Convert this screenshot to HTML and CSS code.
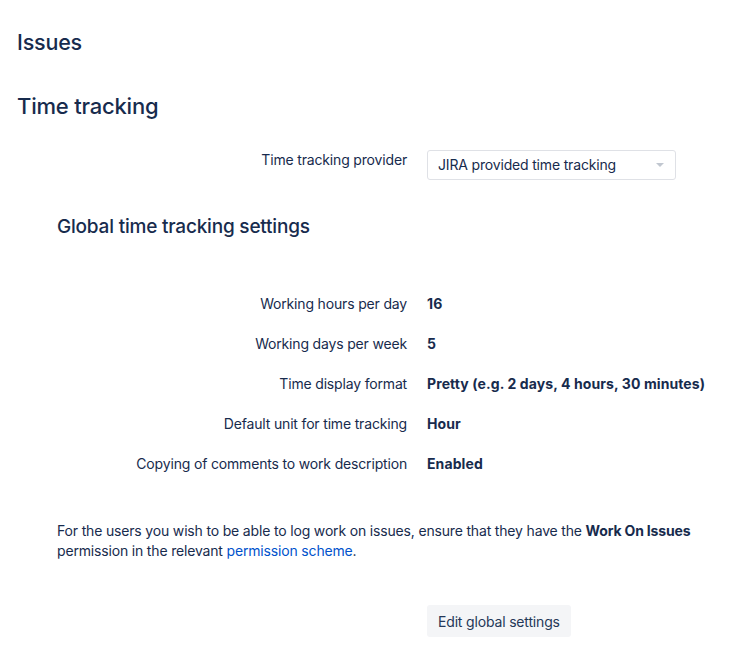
FILE: index.html
```html
<!DOCTYPE html>
<html>

<head>
    <meta name="viewport" content="width=device-width, initial-scale=1.0" charset="utf-8">
    <link rel="stylesheet" href="styles.css">
</head>

<body>
    <div class="page">
        <h1 class="title">Issues</h1>
        <h2 class="section">Time tracking</h2>

        <div class="field provider">
            <div class="label">Time tracking provider</div>
            <div class="select">
                <span>JIRA provided time tracking</span>
                <span class="arrow"></span>
            </div>
        </div>

        <h3 class="subsection">Global time tracking settings</h3>

        <div class="settings">
            <div class="field">
                <div class="label">Working hours per day</div>
                <div class="value">16</div>
            </div>
            <div class="field">
                <div class="label">Working days per week</div>
                <div class="value">5</div>
            </div>
            <div class="field">
                <div class="label">Time display format</div>
                <div class="value">Pretty (e.g. 2 days, 4 hours, 30 minutes)</div>
            </div>
            <div class="field">
                <div class="label">Default unit for time tracking</div>
                <div class="value">Hour</div>
            </div>
            <div class="field">
                <div class="label">Copying of comments to work description</div>
                <div class="value">Enabled</div>
            </div>
        </div>

        <p class="note">For the users you wish to be able to log work on issues, ensure that they have the <b>Work On Issues</b> permission in the relevant <a href="#">permission scheme</a>.</p>

        <div class="field actions">
            <div></div>
            <div><button class="button">Edit global settings</button></div>
        </div>
    </div>
</body>

</html>
```

FILE: styles.css
```css
body {
    margin: 0;
    background-color: #fff;
    font-family: Inter, "Noto Sans", sans-serif;
    color: #172b4d;
    font-size: 14px;
    line-height: 20px;
    letter-spacing: -0.17px;
}

.page {
    padding: 28px 0 20px 17px;
}

.title {
    margin: 0;
    font-size: 21.5px;
    line-height: 28px;
    font-weight: 500;
    letter-spacing: -0.2px;
}

.section {
    margin: 36px 0 0 0;
    font-size: 22px;
    line-height: 28px;
    font-weight: 500;
    letter-spacing: -0.2px;
}

.subsection {
    margin: 35px 0 0 40px;
    font-size: 19px;
    line-height: 24px;
    font-weight: 500;
    letter-spacing: -0.2px;
}

.field {
    display: grid;
    grid-template-columns: 390px auto;
    column-gap: 20px;
    align-items: start;
}

.label {
    text-align: right;
}

.value {
    font-weight: 700;
    letter-spacing: 0.1px;
}

.provider {
    margin-top: 30px;
}

.select {
    box-sizing: border-box;
    width: 249px;
    height: 30px;
    border: 1px solid #dfe1e6;
    border-radius: 3px;
    padding: 0 10px;
    display: flex;
    align-items: center;
    justify-content: space-between;
}

.arrow {
    width: 0;
    height: 0;
    border-left: 4px solid transparent;
    border-right: 4px solid transparent;
    border-top: 4px solid #c1c7d0;
    margin-right: 1px;
}

.settings {
    margin-top: 55px;
    display: flex;
    flex-direction: column;
    gap: 20px;
}

.note {
    margin: 47px 0 0 40px;
    width: 660px;
}

.note b {
    font-weight: 700;
}

.note a {
    color: #0052cc;
    text-decoration: none;
}

.actions {
    margin-top: 44px;
}

.button {
    font-family: inherit;
    font-size: 14px;
    letter-spacing: -0.17px;
    color: #253858;
    background-color: #f4f5f7;
    border: none;
    border-radius: 3px;
    height: 32px;
    padding: 0 11px;
}
```
